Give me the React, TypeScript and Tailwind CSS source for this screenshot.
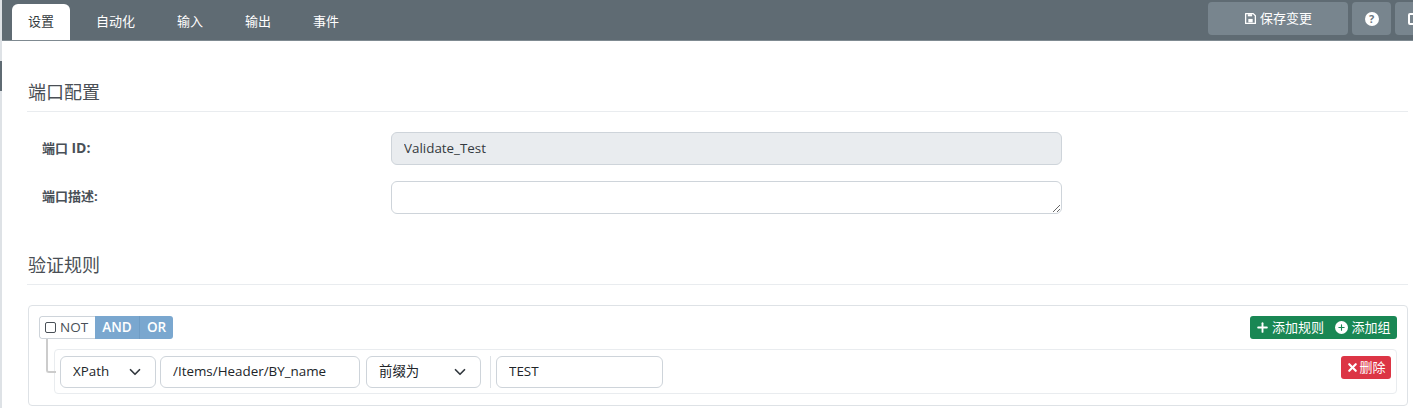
import React from "react";
import { ChevronDown, Plus, X } from "lucide-react";

const sans = "font-['Open_Sans','Noto_Sans_CJK_SC',sans-serif]";

function Sel({ value, w }: { value: string; w: string }) {
  return (
    <div className={`relative ${w} h-[32px]`}>
      <select
        defaultValue={value}
        className="appearance-none w-full h-full pl-[12px] pr-[30px] pb-[2px] text-[13.4px] text-[#212529] bg-white border border-[#ced4da] rounded-[6px] outline-none"
      >
        <option>{value}</option>
      </select>
      <ChevronDown className="absolute right-[12px] top-[7px] w-[18px] h-[18px] text-[#343a40] pointer-events-none" strokeWidth={2.3} />
    </div>
  );
}

function Heading({ children }: { children: React.ReactNode }) {
  return (
    <div className="h-[31px] border-b border-[#e9ecef] text-[18px] leading-[22px] text-[#4a4f55] font-normal -ml-px">
      <span className="ml-px">{children}</span>
    </div>
  );
}

export default function App() {
  return (
    <div className={`w-[1413px] h-[408px] overflow-hidden bg-white flex ${sans}`}>
      <div className="w-[2px] shrink-0 bg-[#dee2e6] flex flex-col">
        <div className="h-[61px]" />
        <div className="h-[30px] bg-[#5f6b73]" />
      </div>
      <div className="flex-1 min-w-0">
        <div className="h-[41px] bg-[#5f6b73] border-b border-[#7f8a91] flex justify-between pl-[10px]">
          <div className="flex items-end gap-[10px] text-[13px] text-white">
            <div className="h-[36px] w-[58px] bg-white text-[#343a40] rounded-t-[6px] flex items-center justify-center">设置</div>
            <div className="h-[36px] px-[16px] flex items-center">自动化</div>
            <div className="h-[36px] px-[16px] flex items-center">输入</div>
            <div className="h-[36px] px-[16px] flex items-center">输出</div>
            <div className="h-[36px] px-[16px] flex items-center">事件</div>
          </div>
          <div className="flex gap-[4px] pt-[2px] -mr-[28px] text-[13px] text-white">
            <button className="w-[140px] h-[33px] bg-[#78858e] rounded-[4px] flex items-center justify-center gap-[3px]">
              <svg width="13" height="13" viewBox="0 0 12 12" fill="none">
                <path d="M1.5 1.5h7l2 2v7h-9z" stroke="white" strokeWidth="1.2" strokeLinejoin="round" />
                <rect x="3.5" y="2" width="4" height="2" fill="white" />
                <rect x="4" y="6.4" width="4" height="3.2" fill="white" />
              </svg>
              保存变更
            </button>
            <button className="w-[39px] h-[33px] bg-[#78858e] rounded-[4px] flex items-center justify-center">
              <span className="w-[14px] h-[14px] rounded-full bg-white text-[#6b7780] text-[11px] leading-[14px] font-bold text-center">?</span>
            </button>
            <button className="w-[46px] h-[33px] bg-[#78858e] rounded-[4px] flex items-center pl-[13px]">
              <span className="w-[12px] h-[12px] border-2 border-white rounded-[2px]" />
            </button>
          </div>
        </div>

        <div className="pl-[26px] pr-[5px] pt-[40px]">
          <Heading>端口配置</Heading>
          <div className="mt-[20px] flex flex-col gap-[16px]">
            <div className="flex items-center h-[33px]">
              <label className="w-[363px] pl-[14px] pb-[2px] text-[13px] font-bold text-[#495057]">
                端口 <span className="text-[14px]">ID:</span>
              </label>
              <input
                disabled
                value="Validate_Test"
                readOnly
                className="w-[671px] h-[33px] pl-[12px] pr-[13px] pb-[2px] bg-[#e9ecef] border border-[#ced4da] rounded-[6px] text-[13.4px] text-[#343a40]"
              />
            </div>
            <div className="flex items-center h-[33px]">
              <label className="w-[363px] pl-[14px] pb-[2px] text-[13px] font-bold text-[#495057]">端口描述:</label>
              <textarea className="block w-[671px] h-[33px] px-[13px] bg-white border border-[#ced4da] rounded-[6px] outline-none" />
            </div>
          </div>

          <div className="mt-[40px]">
            <Heading>验证规则</Heading>
          </div>

          <div className="mt-[20px] h-[101px] border border-[#dee2e6] rounded-[4px] px-[10px] pt-[10px]">
            <div className="flex justify-between">
              <div className="flex h-[23px] text-[13.5px] leading-[23px] rounded-[3px] overflow-hidden">
                <div className="w-[56px] bg-white border border-[#ced4da] border-r-0 rounded-l-[3px] text-[#495057] flex items-center pl-[5px] gap-[4px]">
                  <span className="w-[11px] h-[11px] border border-[#495057] rounded-[2px]" />
                  NOT
                </div>
                <div className="w-[45px] bg-[#7aa7cf] text-white font-semibold text-center border-r border-[#6f9cc4]">AND</div>
                <div className="w-[33px] bg-[#7aa7cf] text-white font-semibold text-center">OR</div>
              </div>
              <div className="flex h-[23px] bg-[#198754] rounded-[3px] text-white text-[13px] leading-[23px]">
                <div className="w-[79px] flex items-center justify-center gap-[2px]">
                  <Plus className="w-[15px] h-[15px]" strokeWidth={3} />
                  添加规则
                </div>
                <div className="w-[68px] flex items-center justify-center gap-[3px]">
                  <span className="w-[13px] h-[13px] rounded-full bg-white flex items-center justify-center">
                    <Plus className="w-[9px] h-[9px] text-[#198754]" strokeWidth={3} />
                  </span>
                  添加组
                </div>
              </div>
            </div>

            <div className="relative mt-[10px] ml-[15px] h-[45px] border border-[#e9ecef] rounded-[4px] pl-[5px] pr-[5px] pt-[6px] flex justify-between">
              <div className="absolute -left-[9px] -top-[11px] w-[10px] h-[34px] border-l-2 border-b-2 border-[#ccc] rounded-bl-[3px]" />
              <div className="flex items-start">
                <Sel value="XPath" w="w-[96px]" />
                <input
                  readOnly
                  value="/Items/Header/BY_name"
                  className="ml-[4px] w-[200px] h-[32px] px-[12px] pb-[2px] border border-[#ced4da] rounded-[6px] text-[13.4px] text-[#212529] outline-none"
                />
                <div className="ml-[6px]">
                  <Sel value="前缀为" w="w-[115px]" />
                </div>
                <div className="ml-[9px] w-px h-[32px] bg-[#dee2e6]" />
                <input
                  readOnly
                  value="TEST"
                  className="ml-[5px] w-[167px] h-[32px] px-[12px] pb-[2px] border border-[#ced4da] rounded-[6px] text-[13.4px] text-[#212529] outline-none"
                />
              </div>
              <button className="w-[50px] h-[23px] bg-[#dc3545] rounded-[3px] text-white text-[13px] leading-[23px] flex items-center justify-center">
                <X className="w-[13px] h-[13px]" strokeWidth={4} />
                删除
              </button>
            </div>
          </div>
        </div>
      </div>
    </div>
  );
}
